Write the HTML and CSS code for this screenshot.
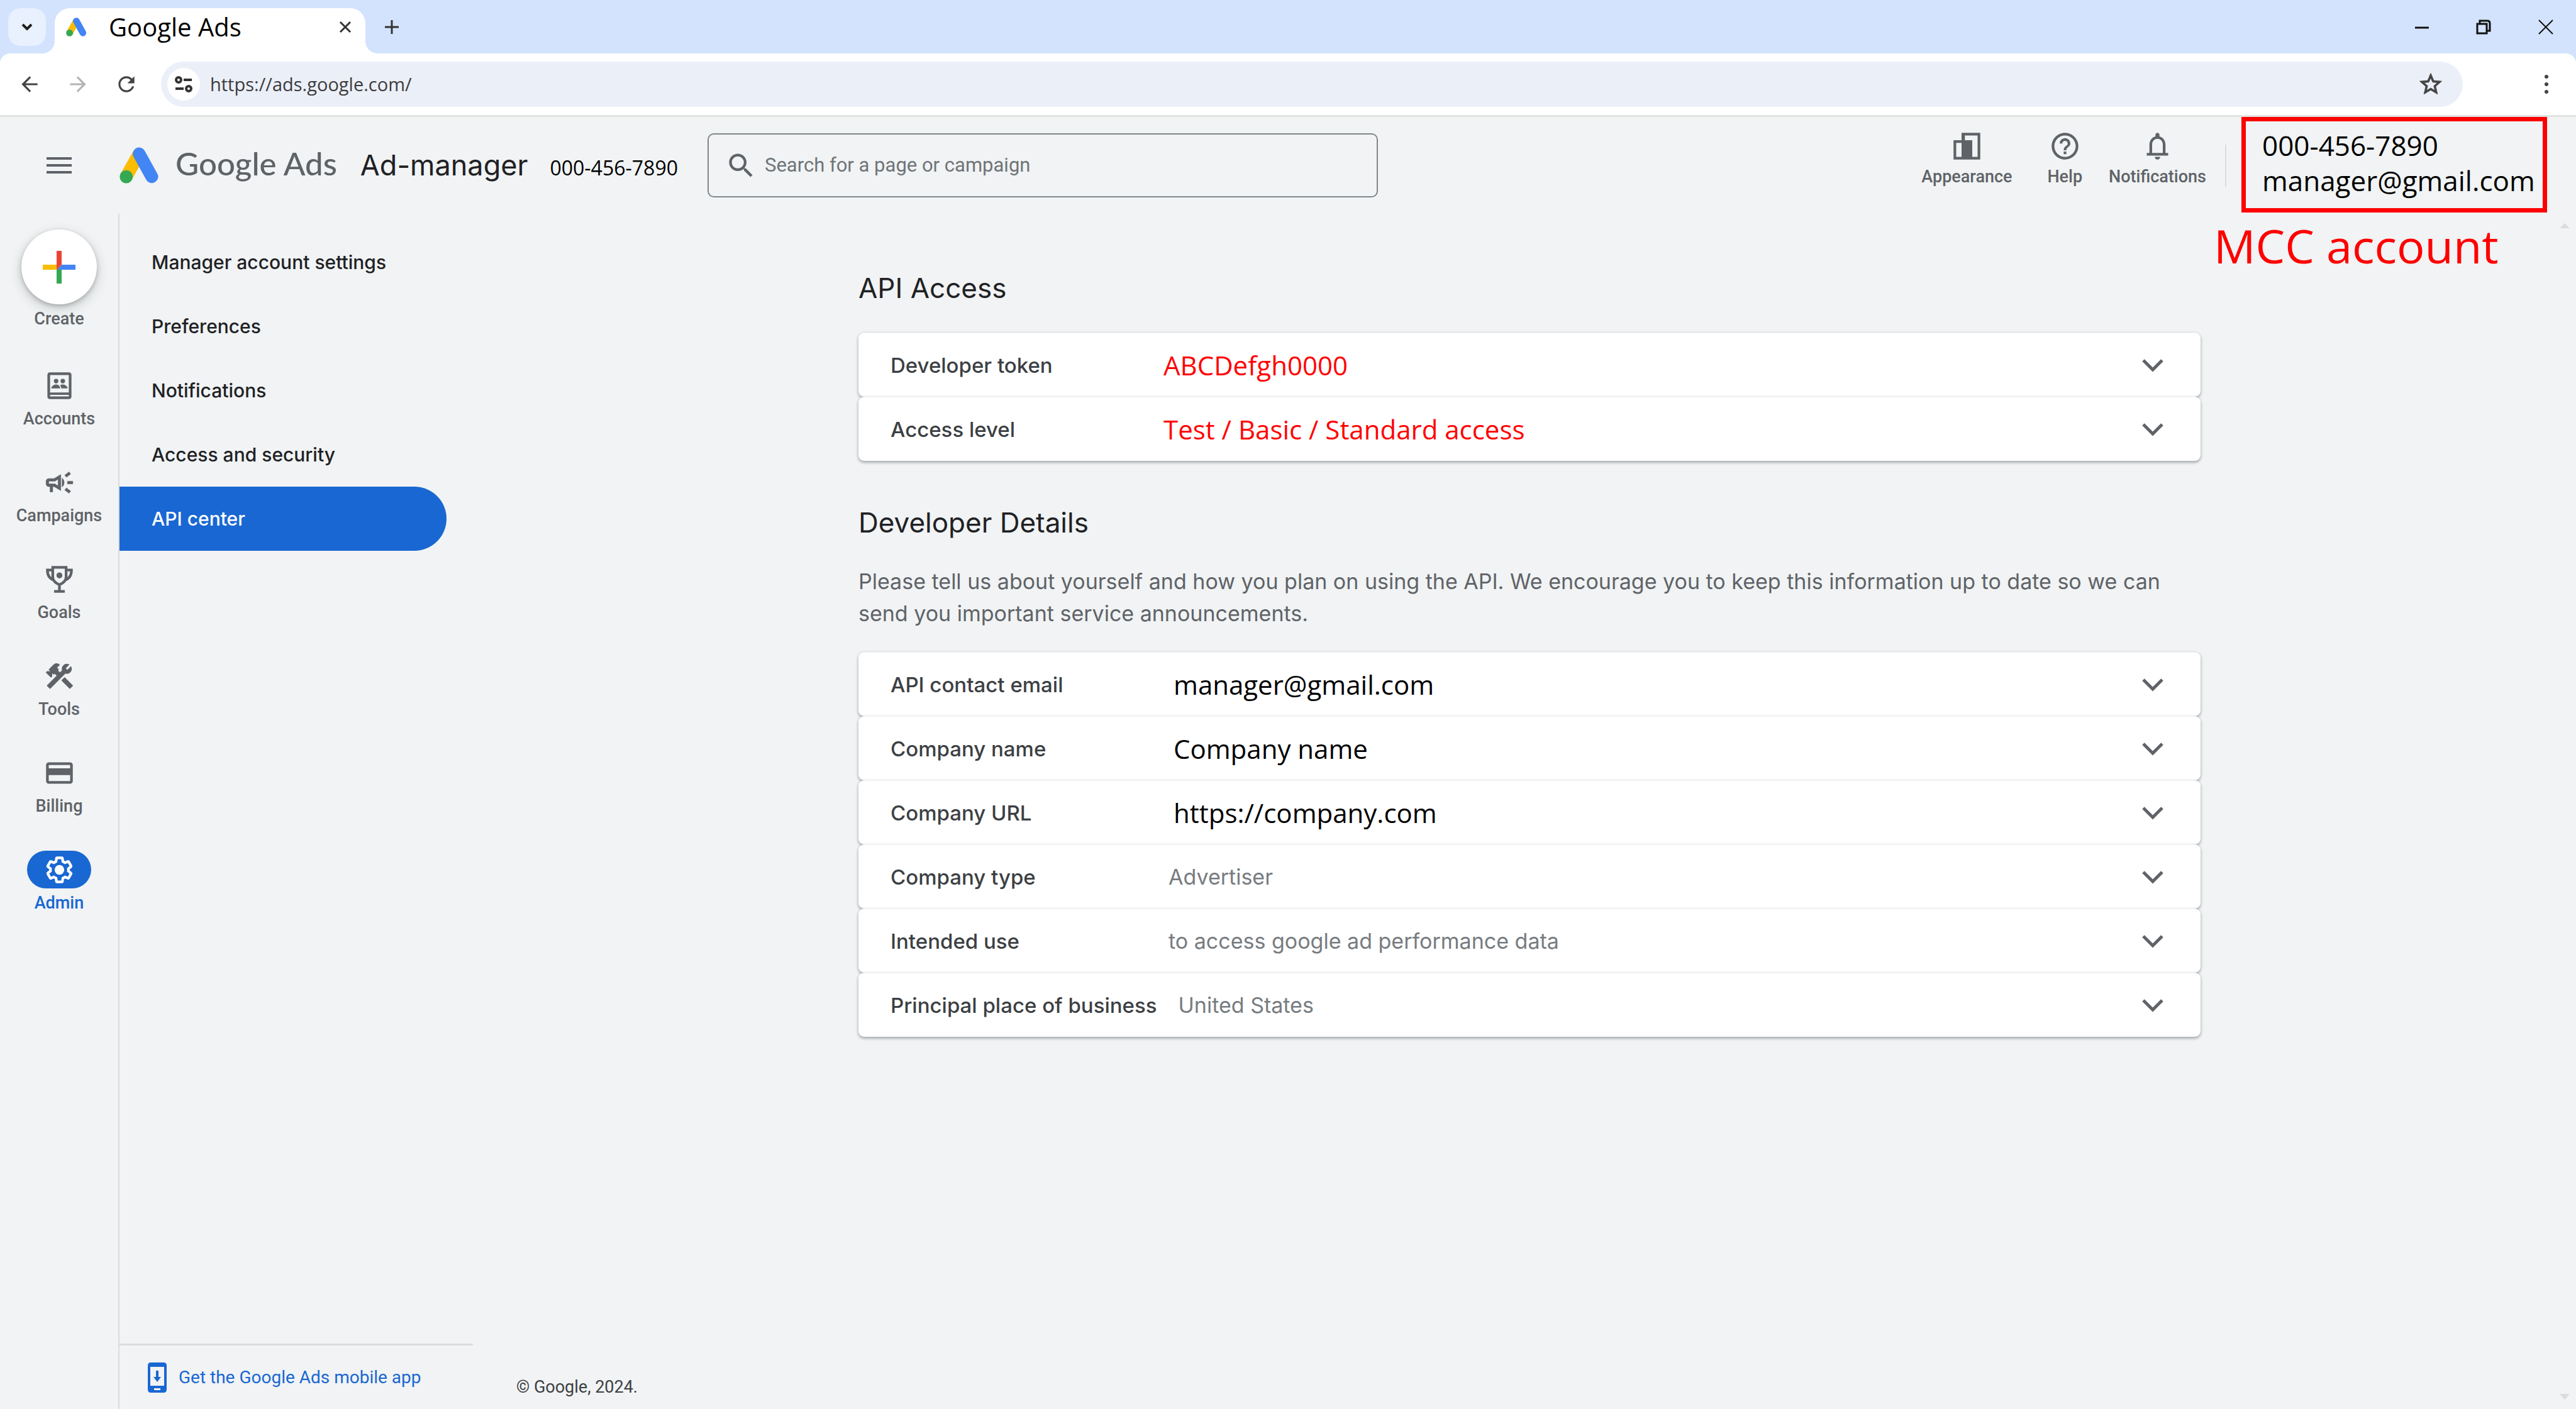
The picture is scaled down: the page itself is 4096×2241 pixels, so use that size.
FILE: index.html
```html
<!DOCTYPE html>
<html lang="en">
<head>
<meta charset="utf-8">
<title>Google Ads - API center</title>
<link rel="stylesheet" href="styles.css">
</head>
<body>
<svg class="sprite" aria-hidden="true">
  <symbol id="ads-logo" viewBox="13 57 206 188">
    <path d="M115 90L48 210" stroke="#fbbc04" stroke-width="66" fill="none"/>
    <path d="M115 91L181 210" stroke="#4285f4" stroke-width="66" stroke-linecap="round" fill="none"/>
    <circle cx="48" cy="210" r="34" fill="#34a853"/>
  </symbol>
  <symbol id="chevron" viewBox="0 0 36 24"><path d="M3 4l15 15L33 4" fill="none" stroke="currentColor" stroke-width="5"/></symbol>
</svg>

<div class="browser">
  <header class="tab-strip">
    <button class="tab-search" aria-label="Search tabs"><svg width="20" height="14" viewBox="0 0 20 14"><path d="M3 3l7 7 7-7" fill="none" stroke="currentColor" stroke-width="4"/></svg></button>
    <div class="tab">
      <svg class="tab-logo"><use href="#ads-logo"/></svg>
      <span class="tab-title">Google Ads</span>
      <button class="plain tab-close" aria-label="Close tab"><svg width="20" height="20" viewBox="0 0 20 20"><path d="M2 2l16 16M18 2L2 18" stroke="currentColor" stroke-width="3"/></svg></button>
    </div>
    <button class="plain new-tab" aria-label="New tab"><svg width="22" height="22" viewBox="0 0 22 22"><path d="M11 0v22M0 11h22" stroke="currentColor" stroke-width="3"/></svg></button>
    <div class="window-controls">
      <button class="plain" aria-label="Minimize"><svg width="22" height="22" viewBox="0 0 22 22"><path d="M0 12h22" stroke="currentColor" stroke-width="3"/></svg></button>
      <button class="plain" aria-label="Restore"><svg width="24" height="24" viewBox="0 0 24 24"><path d="M2 7h15v15H2zM6 6V2h12q4 0 4 4v12h-4" fill="none" stroke="currentColor" stroke-width="3"/></svg></button>
      <button class="plain" aria-label="Close"><svg width="24" height="24" viewBox="0 0 24 24"><path d="M1 1l22 22M23 1L1 23" stroke="currentColor" stroke-width="2"/></svg></button>
    </div>
  </header>

  <div class="toolbar">
    <button class="plain nav" aria-label="Back"><svg width="38" height="38" viewBox="0 0 24 24"><path d="M20 11H7.830l5.590-5.590L12 4l-8 8 8 8 1.410-1.410L7.830 13H20v-2z" fill="currentColor"/></svg></button>
    <button class="plain nav nav-off" aria-label="Forward"><svg width="38" height="38" viewBox="0 0 24 24"><path d="M12 4l-1.410 1.410L16.170 11H4v2h12.170l-5.580 5.590L12 20l8-8z" fill="currentColor"/></svg></button>
    <button class="plain nav" aria-label="Reload"><svg width="38" height="38" viewBox="0 0 24 24"><path d="M17.650 6.350C16.200 4.900 14.210 4 12 4c-4.420 0-7.990 3.580-7.990 8s3.570 8 7.990 8c3.730 0 6.840-2.550 7.730-6h-2.080c-.82 2.330-3.040 4-5.650 4-3.310 0-6-2.690-6-6s2.690-6 6-6c1.660 0 3.140.69 4.220 1.780L13 11h7V4l-2.350 2.350z" fill="currentColor"/></svg></button>
    <div class="address">
      <button class="site-info" aria-label="Site information"><svg width="28" height="26" viewBox="0 0 28 26"><g fill="none" stroke="currentColor" stroke-width="4"><circle cx="6" cy="6" r="4"/><path d="M14 6h13M1 20h13"/><circle cx="22" cy="20" r="4"/></g></svg></button>
      <input class="url" type="text" value="https://ads.google.com/" aria-label="Address">
      <button class="plain" aria-label="Bookmark this page"><svg width="42" height="42" viewBox="0 0 24 24"><path d="M22 9.240l-7.190-.62L12 2 9.190 8.630 2 9.240l5.460 4.730L5.820 21 12 17.270 18.180 21l-1.630-7.030L22 9.240zM12 15.400l-3.760 2.270 1-4.280-3.320-2.880 4.380-.38L12 6.100l1.710 4.040 4.380.38-3.320 2.880 1 4.280L12 15.400z" fill="currentColor" stroke="currentColor" stroke-width=".5"/></svg></button>
    </div>
    <button class="plain kebab" aria-label="Browser menu"><svg width="8" height="32" viewBox="0 0 8 32"><g fill="currentColor"><circle cx="4" cy="4" r="3"/><circle cx="4" cy="16" r="3"/><circle cx="4" cy="28" r="3"/></g></svg></button>
  </div>
</div>

<header class="app-header">
  <button class="plain menu-button" aria-label="Main menu"><svg width="40" height="26" viewBox="0 0 40 26"><path d="M0 2h40M0 13h40M0 24h40" stroke="currentColor" stroke-width="4"/></svg></button>
  <div class="brand">
    <svg class="brand-logo"><use href="#ads-logo"/></svg>
    <div class="brand-text">
      <span class="wordmark">Google Ads</span>
      <span class="account-name">Ad-manager</span>
      <span class="account-id">000-456-7890</span>
    </div>
  </div>
  <label class="search">
    <svg width="51" height="51" viewBox="0 0 24 24" aria-hidden="true"><path d="M15.500 14h-.79l-.28-.27C15.410 12.590 16 11.110 16 9.500 16 5.910 13.090 3 9.500 3S3 5.910 3 9.500 5.910 16 9.500 16c1.610 0 3.090-.59 4.230-1.570l.27.28v.79l5 4.990L20.490 19l-4.990-5zm-6 0C7.010 14 5 11.990 5 9.500S7.010 5 9.500 5 14 7.010 14 9.500 11.990 14 9.500 14z" fill="currentColor"/></svg>
    <input type="text" placeholder="Search for a page or campaign" aria-label="Search for a page or campaign">
  </label>
  <div class="tools">
    <button class="plain tool tool-wide"><svg class="icon" viewBox="0 0 24 24"><path fill="currentColor" fill-rule="evenodd" d="M8 2h14v20H2V7.500h6zM10.500 4v3.500H16V20h4V4zM4 9.500V20h4V9.500z"/></svg><span>Appearance</span></button>
    <button class="plain tool"><svg class="icon" viewBox="0 0 24 24"><path fill="currentColor" d="M11 18h2v-2h-2v2zm1-16C6.480 2 2 6.480 2 12s4.480 10 10 10 10-4.480 10-10S17.520 2 12 2zm0 18c-4.410 0-8-3.590-8-8s3.590-8 8-8 8 3.590 8 8-3.590 8-8 8zm0-14c-2.210 0-4 1.790-4 4h2c0-1.100.9-2 2-2s2 .9 2 2c0 2-3 1.750-3 5h2c0-2.250 3-2.500 3-5 0-2.210-1.790-4-4-4z"/></svg><span>Help</span></button>
    <button class="plain tool"><svg class="icon" viewBox="0 0 24 24"><path fill="currentColor" d="M12 22c1.100 0 2-.9 2-2h-4c0 1.100.9 2 2 2zm6-5v-6c0-3.070-1.630-5.640-4.500-6.320V3.500c0-.83-.67-1.500-1.500-1.500s-1.500.67-1.500 1.500v1.180C7.640 5.360 6 7.920 6 11v6H4v2h16v-2h-2zm-2 0H8v-6c0-2.480 1.510-4.500 4-4.500s4 2.020 4 4.500v6z"/></svg><span>Notifications</span></button>
  </div>
  <div class="account-box">
    <div>000-456-7890</div>
    <div>manager@gmail.com</div>
    <div class="callout">MCC account</div>
  </div>
</header>

<div class="app-body">
  <nav class="rail" aria-label="Sections">
    <button class="plain create">
      <span class="create-disc"><svg width="52" height="52" viewBox="0 0 52 52"><path fill="#fbbc04" d="M0 22h26v8H0z"/><path fill="#4285f4" d="M22 30l8-8h22v8z"/><path fill="#ea4335" d="M22 0h8v22l-8 8z"/><path fill="#34a853" d="M22 30h8v22h-8z"/></svg></span>
      <span>Create</span>
    </button>
    <ul class="rail-list">
      <li><a class="rail-item" href="#accounts"><span class="pill"><svg class="icon" viewBox="0 0 24 24"><g fill="currentColor"><path fill-rule="evenodd" d="M5 2h14q2 0 2 2v16q0 2-2 2H5q-2 0-2-2V4q0-2 2-2zm0 2v13h14V4zm0 14.800V20h14v-1.200z"/><circle cx="9.500" cy="8.500" r="1.700"/><circle cx="14.500" cy="8.500" r="1.700"/><path d="M6 14v-1q1.500-2 3.500-2t3 2v1zM13.300 14v-1l-.8-1.500q1-.5 2-.5 2 0 3.500 2v1z"/></g></svg></span>Accounts</a></li>
      <li><a class="rail-item" href="#campaigns"><span class="pill"><svg class="icon" viewBox="0 0 24 24"><path fill="currentColor" stroke="currentColor" stroke-width=".3" d="M18 11v2h4v-2h-4zM16 17.610c.96.71 2.210 1.650 3.200 2.390.4-.53.8-1.070 1.200-1.600-.99-.74-2.240-1.680-3.200-2.400-.4.54-.8 1.080-1.200 1.610zM20.400 5.600c-.4-.53-.8-1.070-1.200-1.600-.99.74-2.240 1.680-3.200 2.400.4.53.8 1.070 1.200 1.600.96-.72 2.210-1.650 3.200-2.400zM4 9c-1.100 0-2 .9-2 2v2c0 1.100.9 2 2 2h1v4h2v-4h1l5 3V6L8 9H4zm5.030 1.710L11 9.530v4.940l-1.970-1.180-.48-.29H4v-2h4.550l.48-.29zM15.500 12c0-1.330-.58-2.530-1.500-3.350v6.690c.92-.81 1.500-2.010 1.500-3.340z"/></svg></span>Campaigns</a></li>
      <li><a class="rail-item" href="#goals"><span class="pill"><svg class="icon" viewBox="0 0 24 24"><g fill="none" stroke="currentColor" stroke-width="2"><path d="M7 3h10v7q0 4-5 6-5-2-5-6zM7 5H3q0 6 5 7.500M17 5h4q0 6-5 7.500M12 16v5M8 21h8"/></g><circle cx="12" cy="9" r="2.200" fill="currentColor"/></svg></span>Goals</a></li>
      <li><a class="rail-item" href="#tools"><span class="pill"><svg class="icon" viewBox="0 0 24 24"><path fill="currentColor" stroke="currentColor" stroke-width=".5" d="M13.780 15.170l2.120-2.120 6 6-2.120 2.120zM17.500 10c1.930 0 3.500-1.570 3.500-3.500 0-.58-.16-1.120-.41-1.600l-2.700 2.700-1.490-1.490 2.700-2.700c-.48-.25-1.020-.41-1.600-.41C15.570 3 14 4.570 14 6.500c0 .41.080.8.210 1.160l-1.850 1.850-1.780-1.780.71-.71-1.410-1.410L12 3.490c-1.170-1.170-3.070-1.170-4.240 0L4.220 7.030l1.410 1.410H2.810l-.71.71 3.540 3.540.71-.71V9.150l1.410 1.410.71-.71 1.780 1.780-7.410 7.410 2.120 2.120L16.340 9.790c.36.13.75.21 1.160.21z"/></svg></span>Tools</a></li>
      <li><a class="rail-item" href="#billing"><span class="pill"><svg class="icon" viewBox="0 0 24 24"><path fill="currentColor" d="M20 4H4c-1.110 0-1.990.89-1.990 2L2 18c0 1.110.89 2 2 2h16c1.110 0 2-.89 2-2V6c0-1.110-.89-2-2-2zm0 14H4v-4.500h16V18zm0-9.500H4V6h16v2.500z"/></svg></span>Billing</a></li>
      <li><a class="rail-item active" href="#admin" aria-current="true"><span class="pill"><svg class="icon" viewBox="0 0 24 24"><g transform="translate(1.200 1.200) scale(.9)"><path fill="none" stroke="currentColor" stroke-width="2.200" d="M19.430 12.980c.04-.32.07-.64.07-.98 0-.34-.03-.66-.07-.98l2.110-1.650c.19-.15.24-.42.12-.64l-2-3.460c-.09-.16-.26-.25-.44-.25-.06 0-.12.01-.17.03l-2.490 1c-.52-.4-1.080-.73-1.690-.98l-.38-2.650C14.460 2.180 14.250 2 14 2h-4c-.25 0-.46.18-.49.42l-.38 2.650c-.61.25-1.170.59-1.690.98l-2.490-1c-.06-.02-.12-.03-.18-.03-.17 0-.34.09-.43.25l-2 3.460c-.13.22-.07.49.12.64l2.110 1.650c-.04.32-.07.65-.07.98 0 .33.03.66.07.98l-2.110 1.650c-.19.15-.24.42-.12.64l2 3.460c.09.16.26.25.44.25.06 0 .12-.01.17-.03l2.490-1c.52.4 1.080.73 1.690.98l.38 2.650c.03.24.24.42.49.42h4c.25 0 .46-.18.49-.42l.38-2.650c.61-.25 1.170-.59 1.690-.98l2.490 1c.06.02.12.03.18.03.17 0 .34-.09.43-.25l2-3.460c.12-.22.07-.49-.12-.64l-2.110-1.650z"/></g><circle cx="12" cy="12" r="3.600" fill="currentColor"/></svg></span>Admin</a></li>
    </ul>
  </nav>

  <aside class="sidebar">
    <ul class="menu">
      <li><a href="#settings">Manager account settings</a></li>
      <li><a href="#preferences">Preferences</a></li>
      <li><a href="#notifications">Notifications</a></li>
      <li><a href="#security">Access and security</a></li>
      <li><a class="active" href="#api" aria-current="page">API center</a></li>
    </ul>
    <a class="app-link" href="#app"><svg width="30" height="48" viewBox="0 0 30 48"><path fill="currentColor" fill-rule="evenodd" d="M5 0h20q5 0 5 5v38q0 5-5 5H5q-5 0-5-5V5q0-5 5-5zM4 7v30h22V7zM10 41v3h10v-3z"/><path fill="currentColor" d="M13 13h4v10h4l-6 8-6-8h4z"/></svg>Get the Google Ads mobile app</a>
  </aside>

  <main class="main">
    <div class="content">
      <h2>API Access</h2>
      <div class="card access">
        <button class="row"><span class="label">Developer token</span><span class="value">ABCDefgh0000</span><svg class="chevron"><use href="#chevron"/></svg></button>
        <button class="row"><span class="label">Access level</span><span class="value">Test / Basic / Standard access</span><svg class="chevron"><use href="#chevron"/></svg></button>
      </div>
      <h2 class="second">Developer Details</h2>
      <p class="intro">Please tell us about yourself and how you plan on using the API. We encourage you to keep this information up to date so we can send you important service announcements.</p>
      <div class="card">
        <button class="row"><span class="label">API contact email</span><span class="value strong">manager@gmail.com</span><svg class="chevron"><use href="#chevron"/></svg></button>
        <button class="row"><span class="label">Company name</span><span class="value strong">Company name</span><svg class="chevron"><use href="#chevron"/></svg></button>
        <button class="row"><span class="label">Company URL</span><span class="value strong">https://company.com</span><svg class="chevron"><use href="#chevron"/></svg></button>
        <button class="row"><span class="label">Company type</span><span class="value">Advertiser</span><svg class="chevron"><use href="#chevron"/></svg></button>
        <button class="row"><span class="label">Intended use</span><span class="value">to access google ad performance data</span><svg class="chevron"><use href="#chevron"/></svg></button>
        <button class="row"><span class="label">Principal place of business</span><span class="value">United States</span><svg class="chevron"><use href="#chevron"/></svg></button>
      </div>
    </div>
    <footer class="footer">© Google, 2024.</footer>
  </main>
  <div class="scroll-arrows" aria-hidden="true">
    <svg width="16" height="8" viewBox="0 0 16 8"><path d="M8 0l8 8H0z" fill="#dadce0"/></svg>
    <svg width="16" height="9" viewBox="0 0 16 9"><path d="M0 0h16L8 9z" fill="#dadce0"/></svg>
  </div>
</div>
</body>
</html>
```
FILE: styles.css
```css
* { box-sizing: border-box; }

body {
  margin: 0;
  min-height: 100vh;
  display: flex;
  flex-direction: column;
  background: #f1f3f4;
  color: #202124;
  font-family: Inter, sans-serif;
}

.sprite { display: none; }
svg { display: block; flex: none; }
ul { list-style: none; margin: 0; padding: 0; }
a { color: inherit; text-decoration: none; }
button, input { font: inherit; color: inherit; }
.plain { border: 0; padding: 0; background: none; }
.icon { width: 51px; height: 51px; }

/* Browser tabs */
.browser { background: #d3e3fd; }
.tab-strip {
  display: flex;
  height: 85px;
  padding: 13px 36px 0 13px;
}
.tab-search {
  display: grid;
  place-items: center;
  width: 60px;
  height: 60px;
  padding: 0;
  border: 0;
  border-radius: 20px;
  background: #e9f1fe;
  color: #1f1f1f;
}
.tab {
  position: relative;
  display: flex;
  align-items: center;
  width: 494px;
  margin-left: 14px;
  padding: 0 22px 12px 18px;
  border-radius: 24px 24px 0 0;
  background: #fff;
}
.tab::before, .tab::after {
  content: "";
  position: absolute;
  bottom: 0;
  width: 20px;
  height: 20px;
}
.tab::before { left: -20px; background: radial-gradient(circle at 0 0, transparent 20px, #fff 20px); }
.tab::after { right: -20px; background: radial-gradient(circle at 100% 0, transparent 20px, #fff 20px); }
.tab-logo { width: 33px; height: 30px; }
.tab-title {
  margin-left: 35px;
  font: 40px/56px "Open Sans", sans-serif;
  color: #000;
}
.tab-close { margin-left: auto; color: #333; }
.new-tab { margin: 0 0 12px 31px; color: #333; }
.window-controls {
  display: flex;
  align-items: center;
  gap: 75px;
  margin: 0 0 12px auto;
  color: #111;
}

/* Browser toolbar */
.toolbar {
  display: flex;
  align-items: center;
  height: 101px;
  padding: 0 43px 0 28px;
  border-bottom: 3px solid #e2e4e2;
  border-radius: 16px 16px 0 0;
  background: #fff;
  color: #444;
}
.nav { width: 38px; margin-right: 39px; }
.nav-off { color: #b4b4b4; }
.address {
  flex: 1;
  display: flex;
  align-items: center;
  height: 72px;
  margin-right: 129px;
  margin-left: -3px;
  padding: 0 30px 0 10px;
  border-radius: 36px;
  background: #ebeff8;
}
.site-info {
  display: grid;
  place-items: center;
  width: 52px;
  height: 52px;
  padding: 0;
  border: 0;
  border-radius: 50%;
  background: #fff;
  color: #333;
}
.url {
  flex: 1;
  height: 44px;
  margin-left: 16px;
  padding: 0;
  border: 0;
  background: none;
  font: 29px/44px "Open Sans", sans-serif;
  color: #3c3c3c;
}

/* Application header */
.app-header {
  display: flex;
  align-items: center;
  height: 154px;
  padding: 0 46px 0 74px;
}
.menu-button { margin-right: 76px; color: #5f6368; }
.brand { display: flex; align-items: center; flex: 0 0 935px; }
.brand-logo { width: 63px; height: 58px; }
.brand-text {
  display: flex;
  align-items: baseline;
  margin-left: 26px;
  white-space: nowrap;
}
.wordmark { font: 500 51px/64px Lato, sans-serif; color: #5f6368; }
.account-name { margin-left: 37px; font-size: 45px; line-height: 64px; }
.account-id { margin-left: 35px; font: 32px/64px "Open Sans", sans-serif; color: #000; }
.search {
  display: flex;
  align-items: center;
  flex: 0 1 1066px;
  height: 102px;
  padding: 0 26px;
  border: 2px solid #80868b;
  border-radius: 10px;
  color: #5f6368;
}
.search input {
  flex: 1;
  height: 48px;
  margin-left: 12px;
  padding: 0;
  border: 0;
  background: none;
  font: 31px/48px Roboto, sans-serif;
}
.search input::placeholder { color: #6f7478; opacity: 1; }
.tools {
  display: flex;
  align-self: flex-start;
  gap: 42px;
  margin: 21px 56px 0 auto;
  color: #5f6368;
}
.tool {
  display: flex;
  flex-direction: column;
  align-items: center;
  gap: 5px;
  font: 500 27px/36px Roboto, sans-serif;
}
.tool-wide { min-width: 172px; }
.account-box {
  position: relative;
  align-self: flex-start;
  width: 486px;
  height: 152px;
  padding: 10px 0 0 26px;
  border: 7px solid #f00;
  font: 44px/56px "Open Sans", sans-serif;
  color: #000;
  white-space: nowrap;
}
.account-box::before {
  content: "";
  position: absolute;
  left: -33px;
  top: 37px;
  width: 2px;
  height: 67px;
  background: #dadce0;
}
.callout {
  position: absolute;
  left: -51px;
  top: 158px;
  font-size: 74px;
  line-height: 80px;
  color: #f00;
}

/* Body columns */
.app-body { flex: 1; display: flex; }
.rail {
  width: 190px;
  padding-top: 25px;
  border-right: 2px solid #dadce0;
  font: 500 27px/36px Roboto, sans-serif;
  color: #5f6368;
}
.create {
  display: flex;
  flex-direction: column;
  align-items: center;
  gap: 5px;
  width: 100%;
}
.create-disc {
  display: grid;
  place-items: center;
  width: 120px;
  height: 119px;
  border-radius: 50%;
  background: #fff;
  box-shadow: 0 3px 6px rgba(60, 64, 67, .3), 0 6px 16px 4px rgba(60, 64, 67, .15);
}
.rail-list {
  display: flex;
  flex-direction: column;
  gap: 53px;
  margin-top: 58px;
}
.rail-item {
  display: flex;
  flex-direction: column;
  align-items: center;
  gap: 5px;
}
.pill {
  display: grid;
  place-items: center;
  width: 102px;
  height: 60px;
  border-radius: 30px;
}
.rail-item.active { color: #1967d2; }
.active .pill { background: #1967d2; color: #fff; }

.sidebar {
  display: flex;
  flex-direction: column;
  justify-content: space-between;
  width: 562px;
  padding-top: 26px;
}
.menu a {
  display: block;
  width: 520px;
  padding-left: 51px;
  font-size: 30px;
  font-weight: 500;
  line-height: 102px;
}
.menu .active {
  border-radius: 0 51px 51px 0;
  background: #1967d2;
  color: #fff;
}
.app-link {
  display: flex;
  align-items: center;
  gap: 19px;
  height: 104px;
  padding-left: 45px;
  border-top: 3px solid #dadce0;
  font: 28px/36px Roboto, sans-serif;
  color: #1967d2;
}

/* Main content */
.main {
  flex: 1;
  display: flex;
  flex-direction: column;
  justify-content: space-between;
  margin-left: 42px;
  padding: 90px 27px 17px;
}
.content { width: 100%; max-width: 2134px; margin: 0 auto; }
h2 {
  margin: 0 0 43px;
  font-size: 44px;
  font-weight: 400;
  line-height: 56px;
}
h2.second { margin: 70px 0 40px; }
.intro {
  margin: 0 0 36px;
  font-size: 34px;
  line-height: 51px;
  color: #5f6368;
}
.row {
  display: flex;
  align-items: center;
  width: 100%;
  height: 102px;
  padding: 0 58px 0 51px;
  border: 0;
  border-top: 1px solid #f1f3f4;
  border-radius: 9px;
  background: #fff;
  box-shadow: 0 3px 4px rgba(60, 64, 67, .3), 0 1px 5px rgba(60, 64, 67, .2);
  font-size: 34px;
  line-height: 48px;
  text-align: left;
}
.label {
  min-width: 408px;
  margin-right: 34px;
  font-size: 33px;
  font-weight: 500;
  color: #3c4043;
}
.value { color: #777c80; }
.value.strong { padding-left: 8px; font: 42px/56px "Open Sans", sans-serif; color: #000; }
.access .label { min-width: 400px; }
.access .value { font: 42px/56px "Open Sans", sans-serif; color: #f00; }
.chevron { width: 36px; height: 24px; margin-left: auto; color: #5f6368; }
.footer { font: 27px/36px Roboto, sans-serif; color: #3c4043; }

.scroll-arrows {
  display: flex;
  flex-direction: column;
  justify-content: space-between;
  width: 26px;
  padding: 15px 0;
}
```
